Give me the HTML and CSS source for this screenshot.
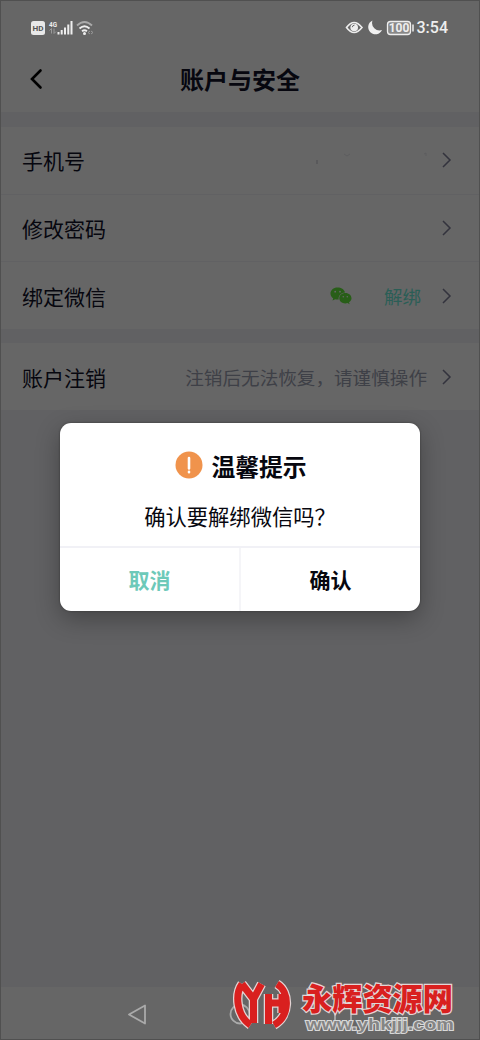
FILE: index.html
```html
<!DOCTYPE html>
<html lang="zh-CN">
<head>
<meta charset="utf-8">
<title>账户与安全</title>
<link rel="stylesheet" href="styles.css">
</head>
<body>
<div class="screen">
  <div class="status">
    <svg class="status-left" width="66" height="18" viewBox="0 0 66 18">
      <rect x="1" y="3" width="14" height="14" rx="2.5" fill="#e8e8e8"/>
      <text x="8" y="13" text-anchor="middle" class="hd" textLength="11" lengthAdjust="spacingAndGlyphs">HD</text>
      <text x="19" y="8.700" class="net" textLength="8" lengthAdjust="spacingAndGlyphs">4G</text>
      <path d="M21.500 15.500v-5l-2 2M24 10.500v5l2-2" class="dim"/>
      <path d="M28.500 14v2.500M31.700 12v4.500M35 9.500v7M38.300 6.500v10M41.500 3v13.500" class="bars"/>
      <path d="M47 7.500q7.500-7 15 0" class="wifi dimmed"/>
      <path d="M49.500 10.500q5-4.600 10 0M52 13.200q2.500-2 5 0" class="wifi"/>
      <circle cx="54.500" cy="15.500" r="1.500" fill="#eee"/>
      <path d="M60 13l-2 1.500 2 1.500M61 13l2 1.500-2 1.500" class="dim"/>
    </svg>
    <div class="status-right">
      <svg width="70" height="18" viewBox="0 0 70 18">
        <path d="M2.500 9.500q7.500-10 15.500 0q-8 10-15.500 0z" fill="none" stroke="#eee" stroke-width="1.600"/>
        <circle cx="10.200" cy="9.500" r="3.800" fill="#eee"/><path d="M8.300 9.200q.2-2 2.200-2.100" fill="none" stroke="#666"/>
        <path d="M28.500 2.500A7.200 7.200 0 1 0 38 12A7.500 7.500 0 0 1 28.500 2.500z" fill="#f0f0f0"/>
        <rect x="43.500" y="3.500" width="23" height="13" rx="3" fill="#888" stroke="#eee" stroke-width="1.300"/>
        <text x="55" y="14" text-anchor="middle" class="battery">100</text>
        <path d="M69 6.500v7" stroke="#eee" stroke-width="1.500"/>
      </svg>
      <span class="time">3:54</span>
    </div>
  </div>
  <header class="header">
    <svg class="back" width="14" height="22" viewBox="0 0 14 22"><path d="M10.500 2.500L2 11l8.500 8.500"/></svg>
    <h1>账户与安全</h1>
  </header>
  <main class="settings">
    <section class="group">
      <div class="row"><span>手机号</span>
        <svg class="masked" width="112" height="20" viewBox="0 0 112 20"><path d="M1 10v4" stroke="#4d4d50"/><path d="M28 4l3 2 3-2M108 4l2-1v3" stroke="#5d5d5f"/></svg>
        <svg class="chevron" viewBox="0 0 10 16"><path d="M1 1l7 7-7 7"/></svg></div>
      <div class="row"><span>修改密码</span><svg class="chevron" viewBox="0 0 10 16"><path d="M1 1l7 7-7 7"/></svg></div>
      <div class="row"><span>绑定微信</span>
        <svg class="wechat" width="22" height="18" viewBox="0 0 22 18">
          <path d="M7.500.5C3.400.5.500 3.200.500 6.500c0 2.100 1.100 3.700 2.700 4.800L2.500 13.500l2.800-1.300c1 .3 2.400.4 3.400.2C8 8.800 11 5.600 15 5.400C14.200 2.500 11.200.5 7.500.5z"/>
          <path d="M15.400 6C11.800 6 9.300 8.400 9.300 11.200c0 2.900 2.700 5.200 6 5.200.8 0 1.500-.1 2.200-.3l2.100 1.100-.6-1.900c1.500-1 2.500-2.400 2.500-4.100C21.500 8.300 18.900 6 15.400 6z"/>
          <g fill="#666"><circle cx="5.200" cy="4.700" r=".9"/><circle cx="10" cy="4.700" r=".9"/><circle cx="13.300" cy="9.700" r=".8"/><circle cx="17.300" cy="9.700" r=".8"/></g>
        </svg>
        <span class="unbind">解绑</span><svg class="chevron" viewBox="0 0 10 16"><path d="M1 1l7 7-7 7"/></svg></div>
    </section>
    <section class="group">
      <div class="row"><span>账户注销</span><span class="note">注销后无法恢复，请谨慎操作</span><svg class="chevron" viewBox="0 0 10 16"><path d="M1 1l7 7-7 7"/></svg></div>
    </section>
  </main>
  <nav class="nav">
    <svg width="20" height="24" viewBox="0 0 20 24"><path d="M18 3.500v18L2 12.500z"/></svg>
    <svg width="22" height="22" viewBox="0 0 22 22"><circle cx="11" cy="11" r="9.500"/></svg>
    <svg width="20" height="20" viewBox="0 0 20 20"><rect x="2" y="2" width="16" height="16" rx="1"/></svg>
  </nav>
  <div class="dialog">
    <div class="dialog-body">
      <div class="dialog-title">
        <svg width="28" height="28" viewBox="0 0 28 28"><circle cx="14" cy="14" r="13.500" fill="#f0934c"/><path d="M14 7v10.500M14 20.800v.4" stroke="#fff" stroke-width="2.600" stroke-linecap="round"/></svg>
        <h2>温馨提示</h2>
      </div>
      <p>确认要解绑微信吗？</p>
    </div>
    <div class="actions"><button class="cancel">取消</button><button>确认</button></div>
  </div>
  <svg class="watermark" width="230" height="62" viewBox="0 0 230 62">
    <g class="logo">
      <g id="mark"><path d="M14 10C7 20 8 41 22.500 51M14 10L25.500 25L33.500 10M25.500 25V49"/><path d="M40.500 20V50M40.500 29H54M54 20V39M49 10C62 18 62 42 46 51"/></g>
      <use href="#mark" class="logo-face"/>
    </g>
    <text x="74" y="36" class="wm-name" textLength="151" lengthAdjust="spacingAndGlyphs">永辉资源网</text>
    <text x="78" y="55.500" class="wm-url" textLength="148" lengthAdjust="spacingAndGlyphs">www.yhkjjj.com</text>
  </svg>
</div>
</body>
</html>
```
FILE: styles.css
```css
* { box-sizing: border-box; }
body { margin: 0; font-family: "Noto Sans CJK SC", sans-serif; }
.screen { position: relative; width: 480px; height: 1040px; display: flex; flex-direction: column; background: #666; color: #07070f; overflow: hidden; border: 1px solid #505050; }
.status { height: 48px; padding: 17px 31px 0 29px; display: flex; justify-content: space-between; align-items: flex-start; }
.status-right { display: flex; gap: 3px; }
.time { font: 500 16px/20px Roboto, sans-serif; color: #eee; }
.hd { font: 700 8px Roboto, sans-serif; fill: #555; }
.net { font: 700 8px Roboto, sans-serif; fill: #eee; }
.battery { font: 700 12px Roboto, sans-serif; fill: #eee; }
.dim { fill: none; stroke: #999; }
.bars { fill: none; stroke: #eee; stroke-width: 2; }
.wifi { fill: none; stroke: #eee; stroke-width: 1.800; }
.dimmed { stroke: #aaa; }
.header { height: 63px; display: grid; grid-template-columns: 60px 1fr 60px; align-items: center; padding-bottom: 4px; }
.header h1 { margin: 0; font-size: 24px; line-height: 36px; font-weight: 700; text-align: center; }
.back { margin-left: 29px; }
.back path { fill: none; stroke: #000; stroke-width: 2.600; stroke-linecap: round; }
.settings { flex: 1; display: flex; flex-direction: column; gap: 14px; padding-top: 15px; background: #616163; }
.group { background: #666; }
.row { height: 67.500px; display: flex; align-items: center; padding: 0 27px 0 21px; font-size: 21px; line-height: 30px; border-bottom: 1px solid #616163; }
.row:last-child { border-bottom: 0; height: 67px; }
.row > span:first-child { flex: 1; }
.chevron { width: 10px; height: 16px; margin-left: 14px; }
.chevron path { fill: none; stroke: #33333d; stroke-width: 1.500; }
.masked { fill: none; }
.wechat { fill: #285e18; margin-right: 32px; }
.unbind { font-size: 18.500px; color: #2b5e56; margin-right: 7px; }
.note { font-size: 18.600px; color: #3e4047; padding-top: 1px; margin-right: 1px; }
.nav { height: 52px; display: flex; align-items: center; justify-content: space-between; padding: 1px 126px 0; }
.nav svg { fill: none; stroke: #aaa; stroke-width: 1.800; stroke-linejoin: round; }
.dialog { position: absolute; left: 59px; top: 422px; width: 360px; height: 188px; background: #fff; border-radius: 11px; box-shadow: 0 0 2px #333, 0 8px 24px rgba(0,0,0,.3); display: flex; flex-direction: column; overflow: hidden; }
.dialog-body { height: 123px; padding-top: 26px; }
.dialog-title { display: flex; justify-content: center; align-items: center; gap: 8px; height: 32px; padding-left: 2px; }
.dialog-title h2 { margin: 0; font-size: 23.800px; line-height: 36px; padding-top: 2px; }
.dialog p { margin: 20px 0 0; font-size: 21.300px; line-height: 30px; text-align: center; }
.actions { flex: 1; display: grid; grid-template-columns: 181px 1fr; border-top: 2px solid #f1f1f6; }
.actions button { border: 0; background: none; font: 700 21px/30px "Noto Sans CJK SC", sans-serif; color: #07070f; padding: 0 0 1px; }
.actions .cancel { color: #6dc9b9; border-right: 2px solid #f5f5f8; }
.watermark { position: absolute; left: 227px; top: 973px; }
.logo { fill: none; stroke: #e4d5d5; stroke-width: 9.500; stroke-linejoin: round; }
.logo-face { stroke: #d9201f; stroke-width: 7; }
.wm-name { font: 900 31px/1 "Noto Sans CJK SC", sans-serif; fill: #d9201f; stroke: #e4d5d5; stroke-width: 2.500; paint-order: stroke; }
.wm-url { font: 700 16px "Liberation Sans", sans-serif; fill: #858585; stroke: #d8d8d8; stroke-width: 2; paint-order: stroke; }
```
